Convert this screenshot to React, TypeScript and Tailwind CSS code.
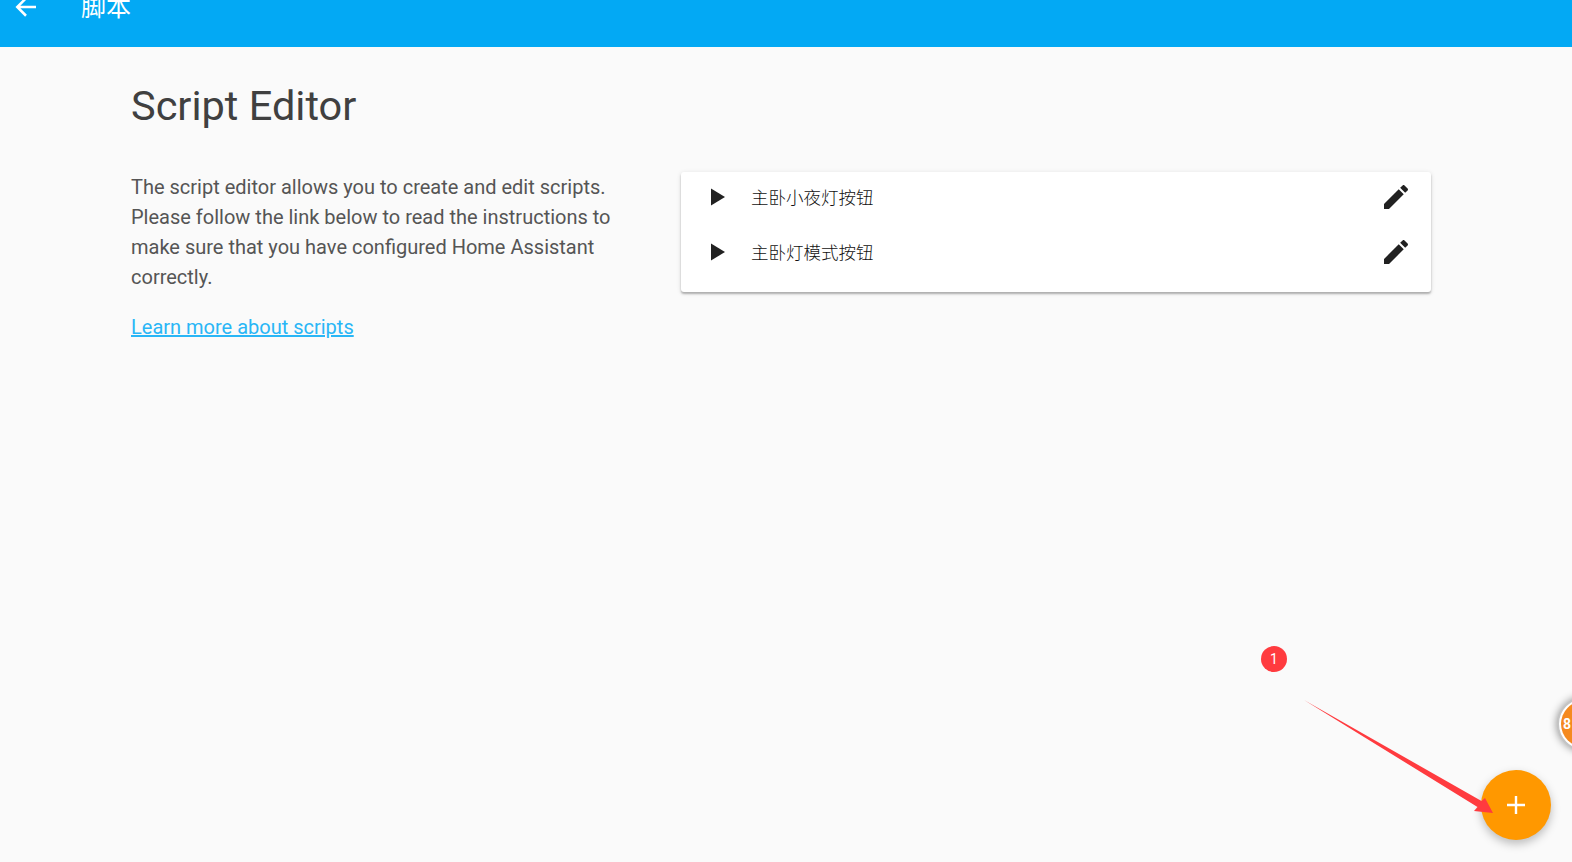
import React from "react";

const cjk = "font-['Roboto','Noto_Sans_CJK_SC',sans-serif]";

function PlayIcon() {
  return (
    <svg width="16" height="18" viewBox="0 0 15 18" className="shrink-0">
      <path d="M0.5 0.5V17.5L14.5 9Z" fill="#212121" />
    </svg>
  );
}

function PencilIcon() {
  return (
    <svg width="32" height="32" viewBox="0 0 24 24" className="shrink-0">
      <path
        fill="#212121"
        d="M3 17.25V21h3.75L17.81 9.94l-3.75-3.75L3 17.25zM20.71 7.04c.39-.39.39-1.02 0-1.41l-2.34-2.34c-.39-.39-1.02-.39-1.41 0l-1.83 1.83 3.75 3.75 1.83-1.83z"
      />
    </svg>
  );
}

function ScriptRow({ name }: { name: string }) {
  return (
    <div className="flex h-[55px] items-center pl-[29px] pr-[19px]">
      <PlayIcon />
      <div className="mt-[3px] ml-[25px] flex-1 text-[17.5px] font-light text-[#111111]">{name}</div>
      <PencilIcon />
    </div>
  );
}

export default function App() {
  return (
    <div className={`relative h-[862px] w-[1572px] overflow-hidden bg-[#fafafa] ${cjk}`}>
      <header className="flex h-[47px] items-start bg-[#03a9f4] pl-4 text-white">
        <svg width="30" height="30" viewBox="0 0 24 24" className="mt-[-8px] ml-[-5px] shrink-0">
          <path fill="none" stroke="#fff" strokeWidth="2" d="M20 12H5M12 5l-7 7 7 7" />
        </svg>
        <div className="mt-[-8px] ml-[40px] text-[25px] leading-[32px]">脚本</div>
      </header>

      <main className="px-[131px]">
        <h1 className="pt-[31px] text-[41.5px] leading-[56px] font-normal text-[#404040]">Script Editor</h1>
        <div className="mt-[39px] flex">
          <div className="w-[500px] shrink-0 text-[20px] leading-[30px] text-[#555555]">
            <p className="mt-[-1px]">
              The script editor allows you to create and edit scripts.
              <br />
              Please follow the link below to read the instructions to
              <br />
              make sure that you have configured Home Assistant
              <br />
              correctly.
            </p>
            <p className="mt-[20px]">
              <a href="#" className="text-[#29b6f6] underline">Learn more about scripts</a>
            </p>
          </div>
          <div className="mt-[-1px] ml-[50px] h-[120px] w-[750px] rounded-[3px] bg-white shadow-[0_2px_2px_rgba(0,0,0,0.25),0_1px_5px_rgba(0,0,0,0.12)]">
            <div className="mt-[-3px]">
              <ScriptRow name="主卧小夜灯按钮" />
              <ScriptRow name="主卧灯模式按钮" />
            </div>
          </div>
        </div>
      </main>

      <div className="absolute top-[646px] left-[1261px] flex h-[26px] w-[26px] items-center justify-center rounded-full bg-[#ff3b3f] text-[14px] text-white">
        1
      </div>

      <div className="absolute top-[770px] left-[1481px] flex h-[70px] w-[70px] items-center justify-center rounded-full bg-[#ff9800] shadow-[0_4px_10px_rgba(0,0,0,0.25)]">
        <svg width="20" height="20" viewBox="0 0 20 20">
          <path d="M10 1V19M1 10H19" stroke="#fff" strokeWidth="2.4" />
        </svg>
      </div>

      <svg className="absolute top-[695px] left-[1300px]" width="200" height="125" viewBox="0 0 200 125">
        <path d="M4 5L177.5 112L174 116L193 118L185 103L181.5 106Z" fill="#ff3b3f" />
      </svg>

      <div className="absolute top-[697px] left-[1557px] h-[54px] w-[54px] rounded-full border-2 border-[#c4c4c4] bg-white p-[2px] shadow-[0_0_8px_rgba(0,0,0,0.45)]">
        <div className="relative h-full w-full rounded-full bg-[#f58a1f]">
          <span className="absolute top-[13px] left-[2px] text-[14px] font-bold text-white">8</span>
        </div>
      </div>
    </div>
  );
}
